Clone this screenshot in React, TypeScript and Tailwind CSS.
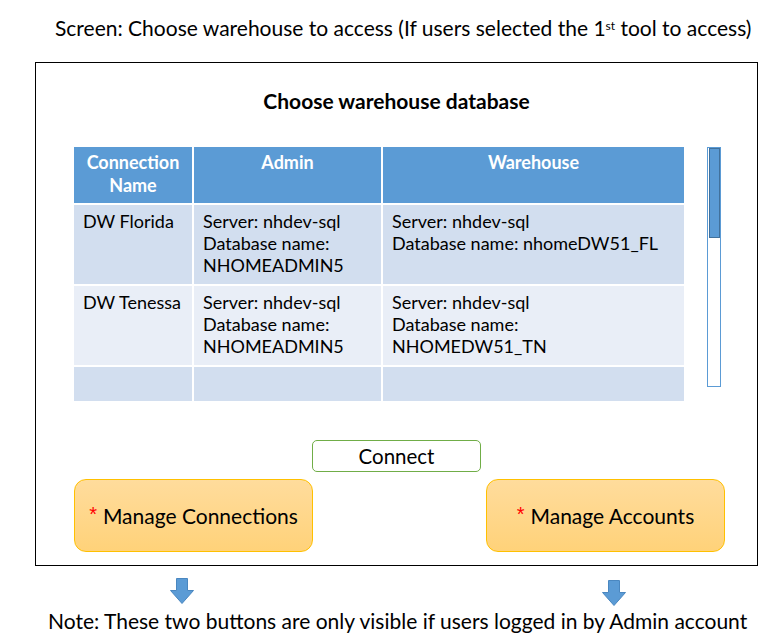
const rows = [
  {
    name: "DW Florida",
    admin: ["Server: nhdev-sql", "Database name:", "NHOMEADMIN5"],
    warehouse: ["Server: nhdev-sql", "Database name: nhomeDW51_FL"],
    bg: "bg-[#d2deef]",
  },
  {
    name: "DW Tenessa",
    admin: ["Server: nhdev-sql", "Database name:", "NHOMEADMIN5"],
    warehouse: ["Server: nhdev-sql", "Database name:", "NHOMEDW51_TN"],
    bg: "bg-[#e9eef7]",
  },
];

function DownArrow() {
  return (
    <svg width="26" height="28" viewBox="0 0 26 28">
      <path
        d="M7.5 1.5 H18.5 V13.5 H24.5 L13 26.5 L1.5 13.5 H7.5 Z"
        fill="#5b9bd5"
        stroke="#4a87c0"
        strokeWidth="1"
      />
    </svg>
  );
}

function ManageButton({ label }: { label: string }) {
  return (
    <div className="flex h-[73px] w-[239px] items-center justify-center rounded-[12px] border border-[#ffc000] bg-gradient-to-b from-[#ffdc9c] to-[#ffd279] text-[21px] text-black">
      <span className="mb-[4px] mr-[6px] font-['Liberation_Sans'] text-[20px] text-[#ff0000]">*</span>
      {label}
    </div>
  );
}

export default function App() {
  return (
    <div className="h-[644px] w-[773px] bg-white font-['Lato','Liberation_Sans',sans-serif] text-black">
      <div className="pl-[55px] pt-[14px] text-[21px] leading-[28px]">
        Screen: Choose warehouse to access (If users selected the 1
        <sup className="text-[12px]">st</sup> tool to access)
      </div>

      <div className="ml-[35px] mt-[20px] flex h-[504px] w-[723px] flex-col border border-black">
        <h1 className="mt-[24px] text-center text-[21px] font-bold leading-[28px]">
          Choose warehouse database
        </h1>

        <div className="ml-[38px] mt-[32px] flex items-start">
          <div className="grid w-[610px] grid-cols-[118px_187px_301px] gap-[2px] text-[18px] leading-[22px]">
            <div className="flex h-[56px] justify-center bg-[#5b9bd5] pt-[4px] text-center font-bold leading-[23px] text-white">
              Connection
              <br />
              Name
            </div>
            <div className="h-[56px] bg-[#5b9bd5] pt-[4px] text-center font-bold text-white">
              Admin
            </div>
            <div className="h-[56px] bg-[#5b9bd5] pt-[4px] text-center font-bold text-white">
              Warehouse
            </div>

            {rows.map((row) => (
              <>
                <div key={row.name + "n"} className={`h-[79px] px-[9px] pt-[5px] ${row.bg}`}>
                  {row.name}
                </div>
                <div key={row.name + "a"} className={`h-[79px] px-[9px] pt-[5px] ${row.bg}`}>
                  {row.admin.map((l) => (
                    <div key={l}>{l}</div>
                  ))}
                </div>
                <div key={row.name + "w"} className={`h-[79px] px-[9px] pt-[5px] ${row.bg}`}>
                  {row.warehouse.map((l) => (
                    <div key={l}>{l}</div>
                  ))}
                </div>
              </>
            ))}

            <div className="h-[34px] bg-[#d2deef]"></div>
            <div className="h-[34px] bg-[#d2deef]"></div>
            <div className="h-[34px] bg-[#d2deef]"></div>
          </div>

          <div className="ml-[23px] flex h-[240px] w-[14px] flex-col border border-[#5b9bd5] pl-[1px]">
            <div className="h-[90px] w-full border border-[#41719c] bg-[#5b9bd5]"></div>
          </div>
        </div>

        <div className="mt-[39px] flex justify-center">
          <div className="flex h-[32px] w-[169px] items-center justify-center rounded-[5px] border border-[#70ad47] text-[20.5px]">
            Connect
          </div>
        </div>

        <div className="ml-[38px] mr-[32px] mt-[7px] flex justify-between">
          <ManageButton label="Manage Connections" />
          <ManageButton label="Manage Accounts" />
        </div>
      </div>

      <div className="mt-[11px] flex">
        <div className="ml-[169px]">
          <DownArrow />
        </div>
        <div className="ml-[406px] mt-[2px]">
          <DownArrow />
        </div>
      </div>

      <div className="pl-[48px] text-[21px] leading-[28px]">
        Note: These two buttons are only visible if users logged in by Admin account
      </div>
    </div>
  );
}
